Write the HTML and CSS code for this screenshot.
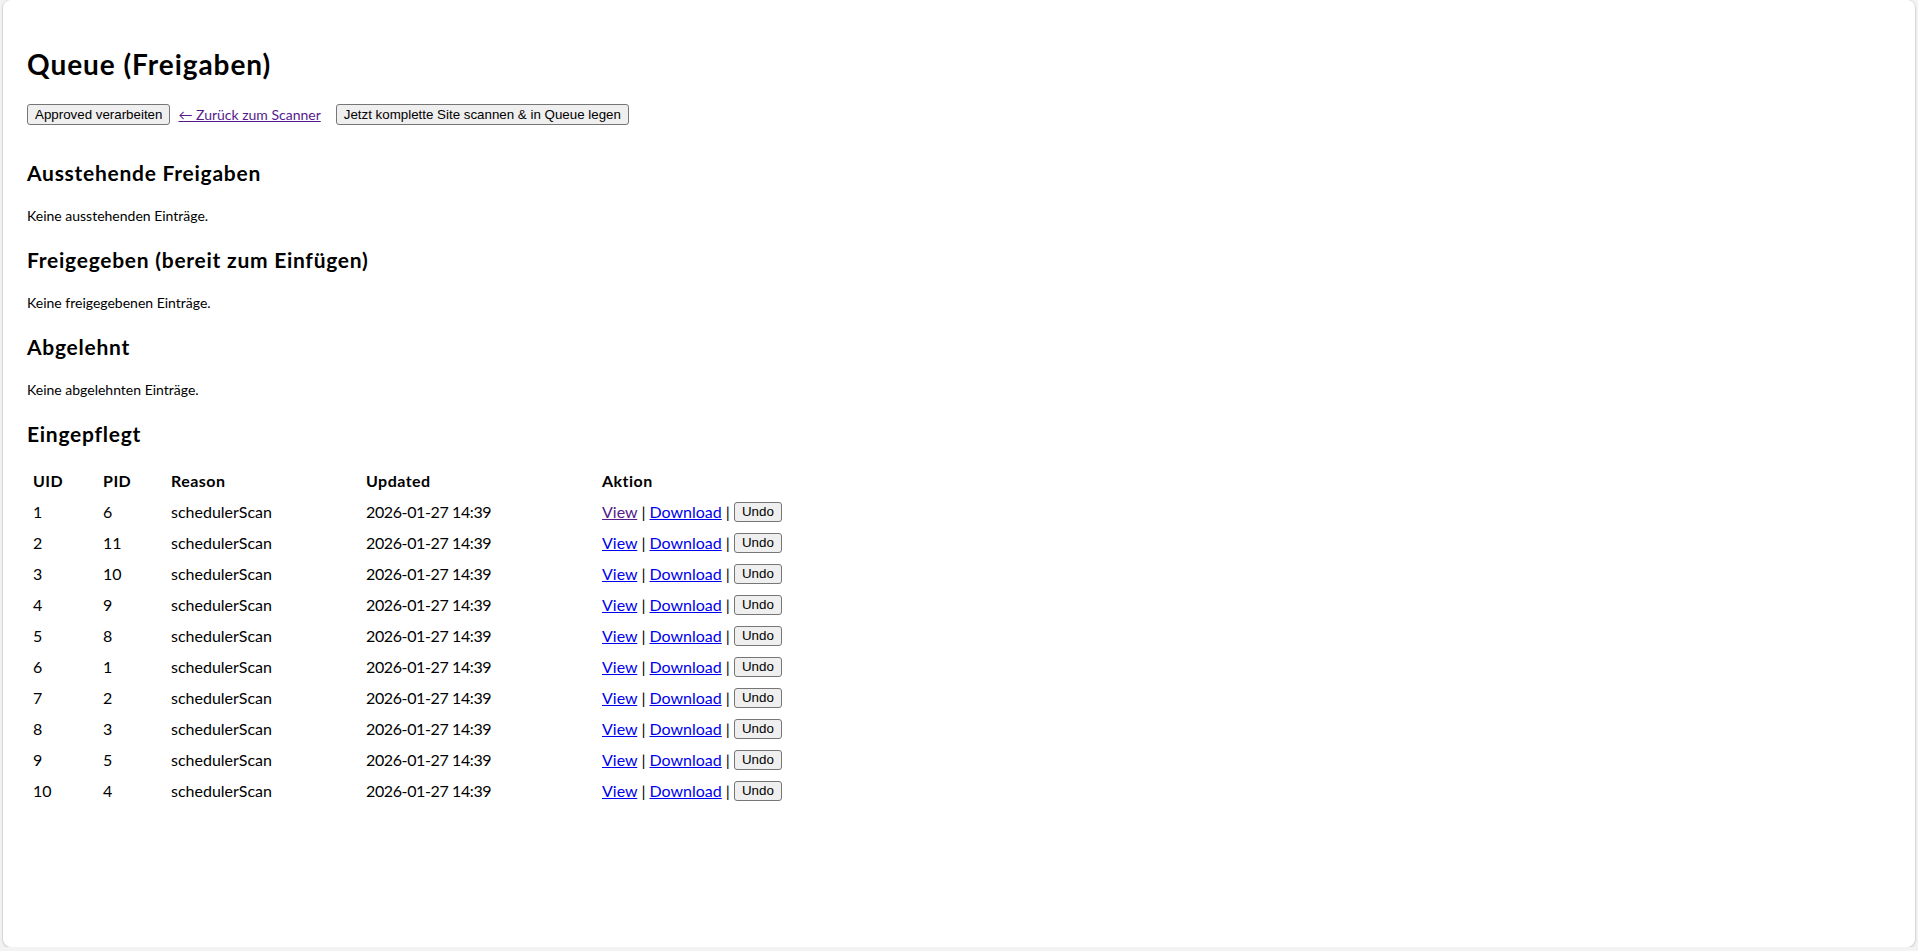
FILE: index.html
```html
<!DOCTYPE html>
<html lang="de">
<head>
<meta charset="utf-8">
<title>Queue (Freigaben)</title>
<link rel="stylesheet" href="styles.css">
</head>
<body>
<div class="card">
  <h1 class="title">Queue (Freigaben)</h1>
  <div class="toolbar">
    <button class="btn" type="button">Approved verarbeiten</button>
    <a class="back-link" href="#scanner">← Zurück zum Scanner</a>
    <button class="btn btn-scan" type="button">Jetzt komplette Site scannen &amp; in Queue legen</button>
  </div>

  <h2 class="section-title">Ausstehende Freigaben</h2>
  <p class="empty">Keine ausstehenden Einträge.</p>

  <h2 class="section-title">Freigegeben (bereit zum Einfügen)</h2>
  <p class="empty">Keine freigegebenen Einträge.</p>

  <h2 class="section-title">Abgelehnt</h2>
  <p class="empty">Keine abgelehnten Einträge.</p>

  <h2 class="section-title section-title-last">Eingepflegt</h2>
  <table class="entries">
    <thead>
      <tr>
        <th class="col-uid">UID</th>
        <th class="col-pid">PID</th>
        <th class="col-reason">Reason</th>
        <th class="col-updated">Updated</th>
        <th class="col-action">Aktion</th>
      </tr>
    </thead>
    <tbody>
      <tr><td>1</td><td>6</td><td>schedulerScan</td><td class="date">2026-01-27 14:39</td><td><a class="link link-visited" href="#v1">View</a> | <a class="link" href="#d1">Download</a> | <button class="btn btn-small" type="button">Undo</button></td></tr>
      <tr><td>2</td><td>11</td><td>schedulerScan</td><td class="date">2026-01-27 14:39</td><td><a class="link" href="#v2">View</a> | <a class="link" href="#d2">Download</a> | <button class="btn btn-small" type="button">Undo</button></td></tr>
      <tr><td>3</td><td>10</td><td>schedulerScan</td><td class="date">2026-01-27 14:39</td><td><a class="link" href="#v3">View</a> | <a class="link" href="#d3">Download</a> | <button class="btn btn-small" type="button">Undo</button></td></tr>
      <tr><td>4</td><td>9</td><td>schedulerScan</td><td class="date">2026-01-27 14:39</td><td><a class="link" href="#v4">View</a> | <a class="link" href="#d4">Download</a> | <button class="btn btn-small" type="button">Undo</button></td></tr>
      <tr><td>5</td><td>8</td><td>schedulerScan</td><td class="date">2026-01-27 14:39</td><td><a class="link" href="#v5">View</a> | <a class="link" href="#d5">Download</a> | <button class="btn btn-small" type="button">Undo</button></td></tr>
      <tr><td>6</td><td>1</td><td>schedulerScan</td><td class="date">2026-01-27 14:39</td><td><a class="link" href="#v6">View</a> | <a class="link" href="#d6">Download</a> | <button class="btn btn-small" type="button">Undo</button></td></tr>
      <tr><td>7</td><td>2</td><td>schedulerScan</td><td class="date">2026-01-27 14:39</td><td><a class="link" href="#v7">View</a> | <a class="link" href="#d7">Download</a> | <button class="btn btn-small" type="button">Undo</button></td></tr>
      <tr><td>8</td><td>3</td><td>schedulerScan</td><td class="date">2026-01-27 14:39</td><td><a class="link" href="#v8">View</a> | <a class="link" href="#d8">Download</a> | <button class="btn btn-small" type="button">Undo</button></td></tr>
      <tr><td>9</td><td>5</td><td>schedulerScan</td><td class="date">2026-01-27 14:39</td><td><a class="link" href="#v9">View</a> | <a class="link" href="#d9">Download</a> | <button class="btn btn-small" type="button">Undo</button></td></tr>
      <tr><td>10</td><td>4</td><td>schedulerScan</td><td class="date">2026-01-27 14:39</td><td><a class="link" href="#v10">View</a> | <a class="link" href="#d10">Download</a> | <button class="btn btn-small" type="button">Undo</button></td></tr>
    </tbody>
  </table>
</div>
</body>
</html>
```

FILE: styles.css
```css
html, body {
  margin: 0;
  padding: 0;
}

body {
  background: #f3f3f3;
  font-family: Lato, "DejaVu Sans", sans-serif;
  color: #000;
}

.card {
  box-sizing: border-box;
  height: 947px;
  margin: 0 3px;
  padding: 46px 24px 0;
  background: #fff;
  border-radius: 8px;
  box-shadow: 0 0 0 1px rgba(0, 0, 0, 0.05), 0 1px 3px rgba(0, 0, 0, 0.16);
}

.title {
  margin: 0 0 21px;
  font-size: 28px;
  line-height: 37px;
  font-weight: 700;
  letter-spacing: 0.034em;
}

.toolbar {
  display: flex;
  align-items: center;
  height: 21px;
  margin: 0 0 34px;
}

.btn {
  box-sizing: border-box;
  margin: 0;
  padding: 2px 7px;
  font-family: "Liberation Sans", Arial, sans-serif;
  font-size: 13.333px;
  line-height: 15px;
  color: #000;
  background: #efefef;
  border: 1px solid #767676;
  border-radius: 3px;
}

.back-link {
  margin-left: 8px;
  font-size: 14px;
  line-height: 19px;
  color: #551a8b;
}

.btn-scan {
  margin-left: 15px;
}

.section-title {
  margin: 0 0 19px;
  font-size: 21px;
  line-height: 28px;
  font-weight: 700;
  letter-spacing: 0.035em;
}

.section-title-last {
  margin-bottom: 17px;
}

.empty {
  margin: 0 0 21px;
  font-size: 14px;
  line-height: 19px;
}

.entries {
  border-spacing: 2px;
  font-size: 16px;
}

.entries th {
  padding: 4px;
  text-align: left;
  font-weight: 700;
  line-height: 20px;
  letter-spacing: 0.03em;
}

.entries td {
  padding: 4px;
  line-height: 21px;
  white-space: nowrap;
}

.entries .date {
  letter-spacing: -0.38px;
}

.col-uid { width: 60px; }
.col-pid { width: 58px; }
.col-reason { width: 185px; }
.col-updated { width: 226px; }

.link {
  color: #0000ee;
}

.link-visited {
  color: #551a8b;
}

.btn-small {
  padding: 2px 7px;
  line-height: 14px;
  vertical-align: top;
  margin-top: 1px;
}
```
